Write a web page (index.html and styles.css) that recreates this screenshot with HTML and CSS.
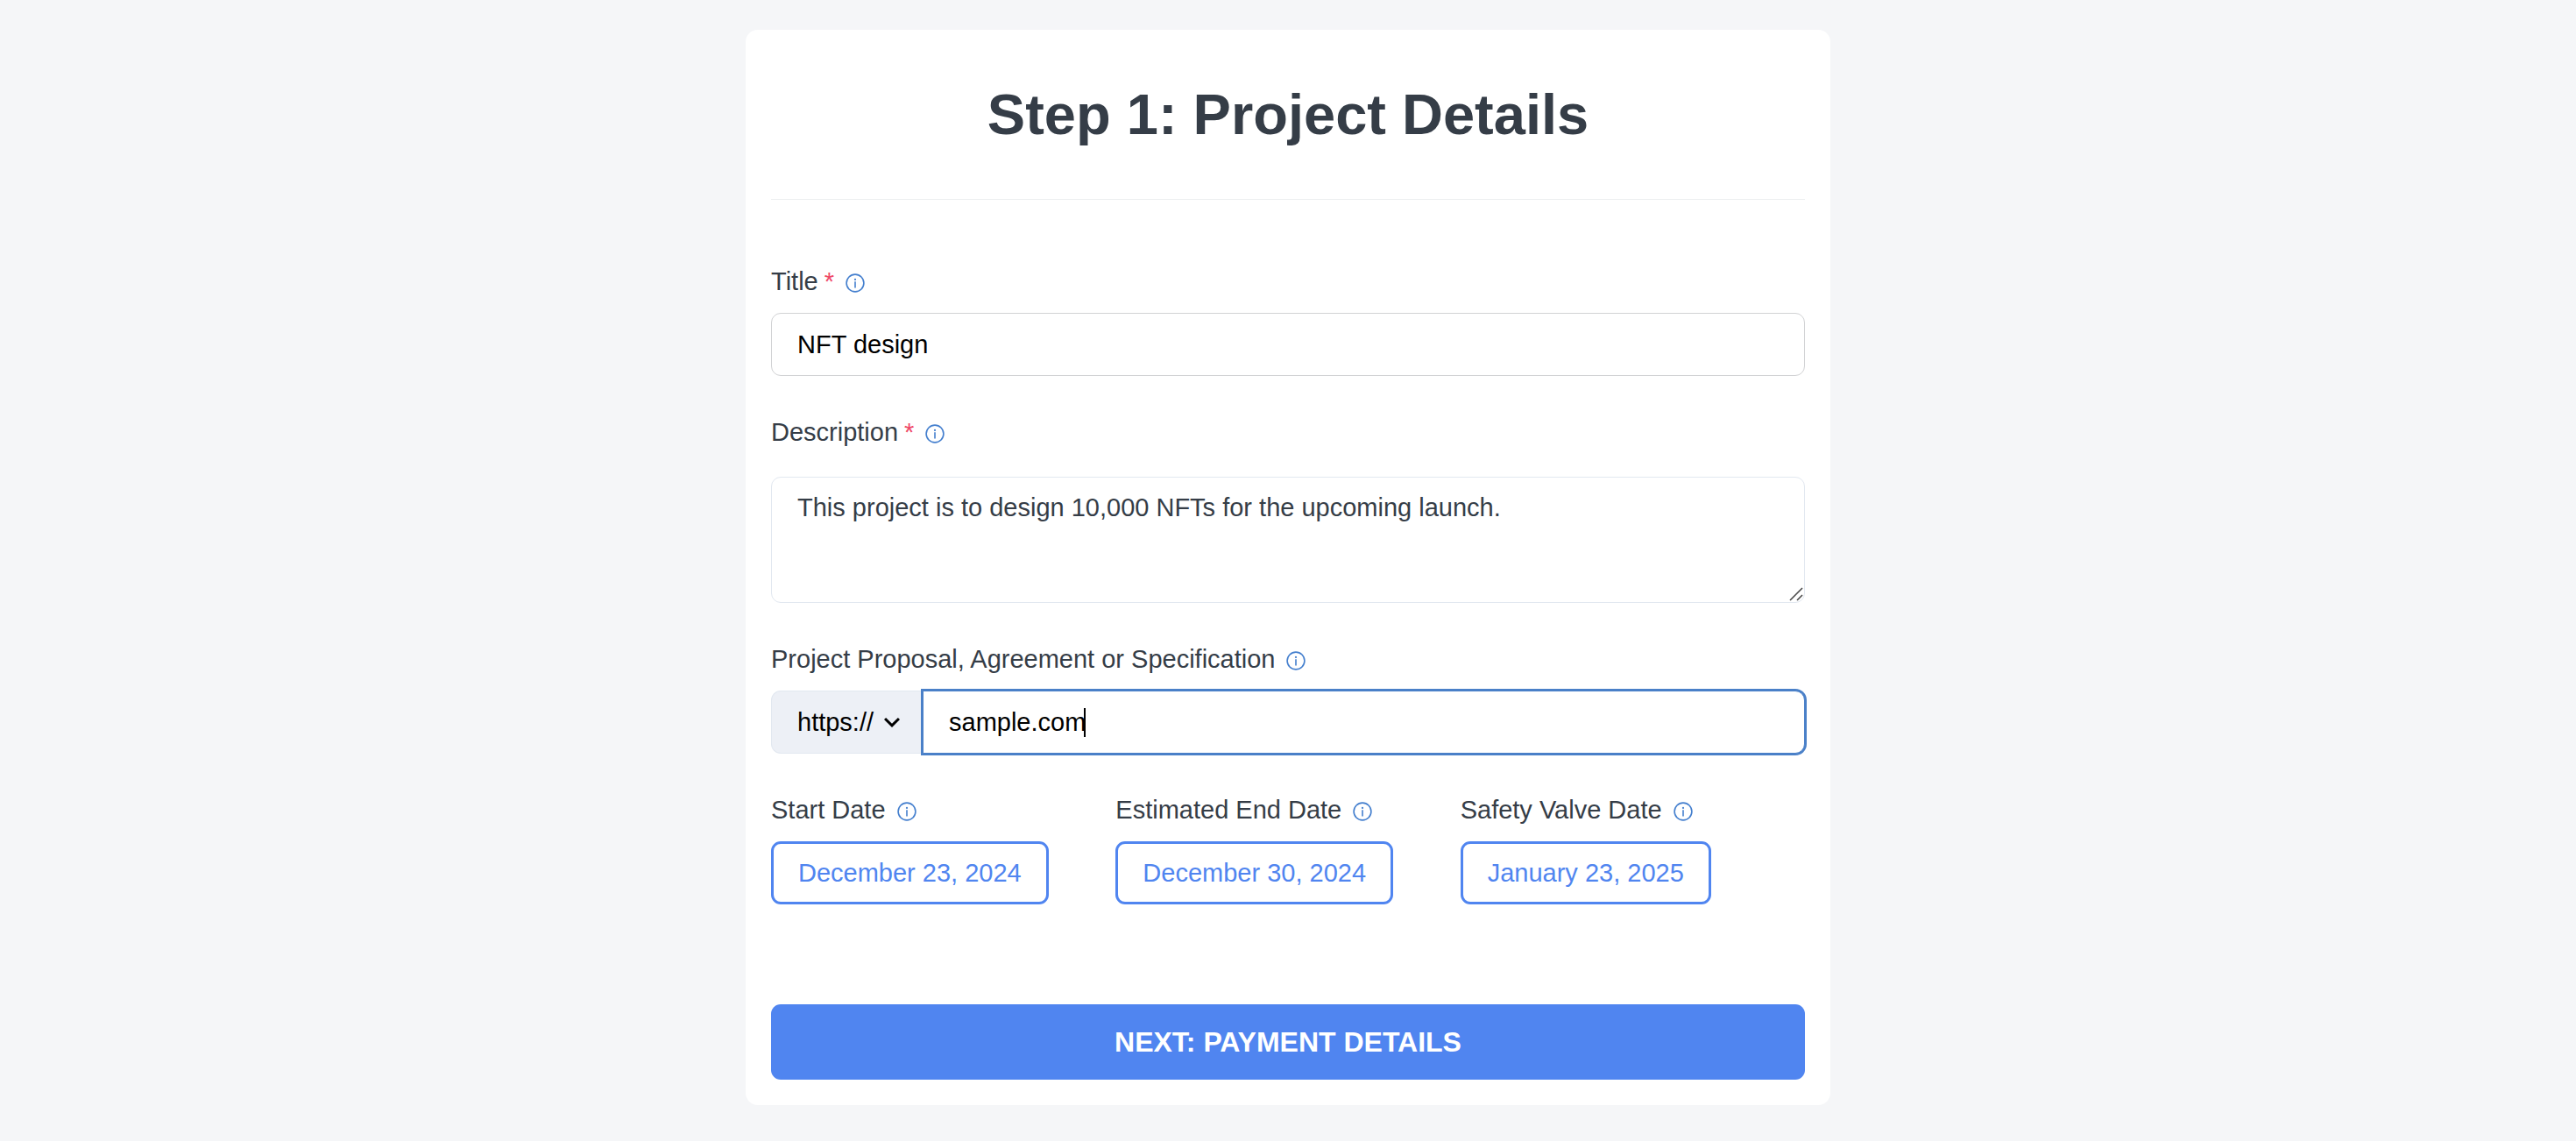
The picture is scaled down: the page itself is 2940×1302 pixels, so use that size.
FILE: index.html
```html
<!DOCTYPE html>
<html lang="en">
<head>
<meta charset="utf-8">
<meta name="viewport" content="width=device-width, initial-scale=1">
<title>Step 1: Project Details</title>
<link rel="stylesheet" href="styles.css">
</head>
<body>
<svg class="sprite">
  <symbol id="info" viewBox="0 0 24 24">
    <circle cx="12" cy="12" r="9.9" fill="none" stroke="currentColor" stroke-width="1.6"/>
    <circle cx="12" cy="7.9" r="1.1" fill="currentColor"/>
    <path d="M12 10.3v7.2" stroke="currentColor" stroke-width="1.6"/>
  </symbol>
</svg>
<main class="card">
  <h1 class="heading">Step 1: Project Details</h1>
  <hr class="divider">
  <form class="form">
    <div class="field">
      <label class="label" for="title">Title<span class="required">*</span><svg class="info"><use href="#info"/></svg></label>
      <input class="input" id="title" type="text" value="NFT design" required>
    </div>
    <div class="field field-loose">
      <label class="label" for="description">Description<span class="required">*</span><svg class="info"><use href="#info"/></svg></label>
      <div class="textarea-box">
        <textarea class="input textarea" id="description" required>This project is to design 10,000 NFTs for the upcoming launch.</textarea>
        <svg class="grip" viewBox="0 0 16 16"><path d="M1 15L15 1M9 15l6-6" stroke="#4d4d4d" stroke-width="1.6"/></svg>
      </div>
    </div>
    <div class="field">
      <label class="label" for="url">Project Proposal, Agreement or Specification<svg class="info"><use href="#info"/></svg></label>
      <div class="url-group">
        <div class="protocol">
          <select class="protocol-select" aria-label="Protocol">
            <option>https://</option>
          </select>
          <svg class="chevron" viewBox="0 0 24 24"><path fill="currentColor" d="M16.59 8.59L12 13.17 7.41 8.59 6 10l6 6 6-6z"/></svg>
        </div>
        <div class="url-box">
          <input class="input url-input" id="url" type="text" value="sample.com">
          <span class="caret-line" aria-hidden="true"><span class="caret-offset">sample.com</span></span>
        </div>
      </div>
    </div>
    <div class="dates">
      <div class="field">
        <label class="label" for="start">Start Date<svg class="info"><use href="#info"/></svg></label>
        <button class="date-button" id="start" type="button">December 23, 2024</button>
      </div>
      <div class="field">
        <label class="label" for="end">Estimated End Date<svg class="info"><use href="#info"/></svg></label>
        <button class="date-button" id="end" type="button">December 30, 2024</button>
      </div>
      <div class="field">
        <label class="label" for="valve">Safety Valve Date<svg class="info"><use href="#info"/></svg></label>
        <button class="date-button" id="valve" type="button">January 23, 2025</button>
      </div>
    </div>
    <button class="next" type="submit">NEXT: PAYMENT DETAILS</button>
  </form>
</main>
</body>
</html>
```
FILE: styles.css
```css
* {
  box-sizing: border-box;
}

body {
  margin: 0;
  padding: 34px 29px;
  background: #f5f6f8;
  color: #353d47;
  font: 29px/43px "Liberation Sans", Arial, sans-serif;
}

input,
textarea,
select,
button {
  font: inherit;
}

.sprite {
  display: none;
}

.card {
  max-width: 1238px;
  margin: 0 auto;
  padding: 29px;
  background: #fff;
  border-radius: 14px;
}

.heading {
  margin: 29px 0 57px;
  font-size: 65px;
  line-height: 78px;
  font-weight: 700;
  text-align: center;
}

.divider {
  height: 1px;
  margin: 0 0 72px;
  border: 0;
  background: #eceef0;
}

.form {
  display: flex;
  flex-direction: column;
  gap: 43px;
}

.field {
  display: flex;
  flex-direction: column;
  align-items: flex-start;
  gap: 14px;
}

.field-loose {
  gap: 29px;
}

.label {
  height: 43px;
}

.required {
  margin-left: 7px;
  color: #ef4a68;
}

.info {
  width: 24px;
  height: 24px;
  margin-left: 12px;
  vertical-align: middle;
  color: #447fce;
}

.input {
  width: 100%;
  height: 72px;
  padding: 0 29px;
  border: 1px solid #d1d2d4;
  border-radius: 11px;
  background: #fff;
  color: #000;
  outline: 0;
}

.textarea-box {
  position: relative;
  width: 100%;
}

.textarea {
  display: block;
  height: 144px;
  padding: 14px 29px;
  line-height: 40px;
  border-color: #e2e8f0;
  color: #353d47;
  resize: vertical;
}

.textarea::-webkit-resizer {
  background: transparent;
}

.grip {
  position: absolute;
  right: 2px;
  bottom: 2px;
  width: 16px;
  height: 16px;
  pointer-events: none;
}

.url-group {
  display: flex;
  width: 100%;
}

.protocol {
  position: relative;
  flex: none;
}

.protocol-select {
  width: 173px;
  height: 72px;
  padding: 0 29px;
  appearance: none;
  border: 1px solid #e2e8f0;
  border-right: 0;
  border-radius: 11px 0 0 11px;
  background: #edf0f6;
  color: #000;
}

.chevron {
  position: absolute;
  top: 18px;
  right: 17px;
  width: 36px;
  height: 36px;
  color: #000;
  pointer-events: none;
}

.url-box {
  position: relative;
  flex: 1;
}

.url-input {
  display: block;
  border-color: #4a80c8;
  border-radius: 0 11px 11px 0;
  box-shadow: 0 0 0 2px #4a80c8;
}

.caret-line {
  position: absolute;
  top: 20px;
  left: 28px;
  height: 33px;
  border-right: 2px solid #000;
  pointer-events: none;
}

.caret-offset {
  visibility: hidden;
}

.dates {
  display: grid;
  grid-template-columns: repeat(3, 1fr);
}

.date-button {
  height: 72px;
  padding: 0 28px;
  border: 3px solid #5085f0;
  border-radius: 11px;
  background: #fff;
  color: #5085f0;
}

.next {
  height: 86px;
  margin-top: 71px;
  border: 0;
  border-radius: 11px;
  background: #5085f0;
  color: #fff;
  font-size: 32px;
  font-weight: 700;
}
```
